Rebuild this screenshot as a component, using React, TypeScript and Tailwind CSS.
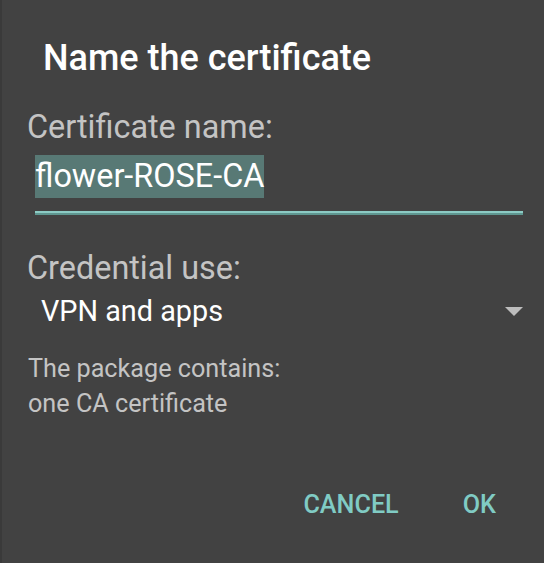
export default function App() {
  return (
    <div
      className="w-[544px] h-[563px] bg-[#424242] border-l-2 border-[#3a3a3a] flex flex-col overflow-hidden"
      style={{ fontFamily: "Roboto, 'Noto Sans', sans-serif" }}
    >
      {/* Title */}
      <h1 className="mt-[37px] ml-[41px] text-[36px] leading-[42px] font-medium text-white">
        Name the certificate
      </h1>

      {/* Name field */}
      <div className="mt-[29px] ml-[25px] mr-[21px] flex flex-col">
        <label className="text-[32.4px] leading-[38px] text-[#c4c4c4]">Certificate name:</label>
        <div className="mt-[9px] ml-[8px] flex">
          <span className="h-[43px] text-[32.4px] leading-[43px] text-white bg-[#587975]">
            flower-ROSE-CA
          </span>
        </div>
        <div className="mt-[13px] ml-[8px] flex flex-col">
          <div className="h-[2px] bg-[#8ccbc4]" />
          <div className="h-[2px] bg-[#5f9690]" />
        </div>
      </div>

      {/* Credential use */}
      <div className="mt-[34px] ml-[25px] mr-[21px] flex flex-col">
        <label className="text-[32.4px] leading-[38px] text-[#c4c4c4]">Credential use:</label>
        <div className="mt-[7px] flex items-center justify-between">
          <span className="ml-[14px] text-[28.8px] leading-[34px] text-white">VPN and apps</span>
          <svg width="18" height="9" viewBox="0 0 18 9" className="mt-[1px]">
            <path d="M0 0 H18 L9 9 Z" fill="#bdbdbd" />
          </svg>
        </div>
      </div>

      {/* Package info */}
      <div className="mt-[23px] ml-[26px] text-[25.2px] leading-[35px] text-[#c4c4c4]">
        <p>The package contains:</p>
        <p>one CA certificate</p>
      </div>

      {/* Buttons */}
      <div className="mt-[69px] pr-[48px] flex justify-end gap-[64px]">
        <button className="text-[25.2px] leading-[30px] font-medium text-[#80cbc4]">CANCEL</button>
        <button className="text-[25.2px] leading-[30px] font-medium text-[#80cbc4]">OK</button>
      </div>
    </div>
  );
}
